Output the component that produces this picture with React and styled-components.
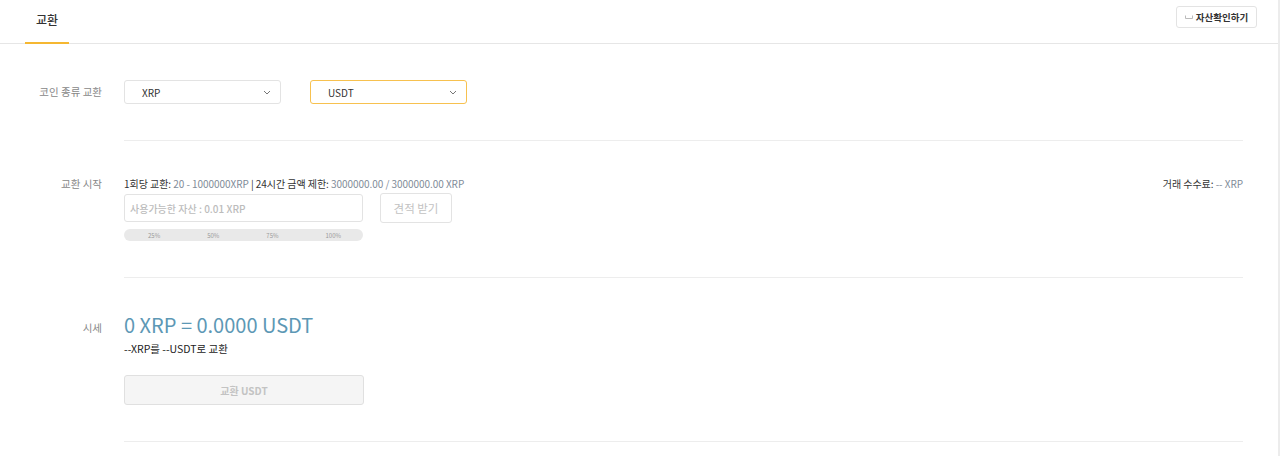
import React from "react";
import styled, { createGlobalStyle } from "styled-components";

const Global = createGlobalStyle`
  html, body { margin: 0; padding: 0; background: #fff; }
  body { font-family: "Noto Sans CJK KR", "Noto Sans", sans-serif; color: #333; }
  * { box-sizing: border-box; }
`;

const Page = styled.div`
  width: 1280px;
  height: 456px;
  border-right: 2px solid #ececec;
  overflow: hidden;
`;

const Header = styled.div`
  height: 44px;
  border-bottom: 1px solid #e6e6e6;
  display: flex;
  align-items: flex-start;
  justify-content: space-between;
  padding: 0 21px 0 25px;
`;

const Tab = styled.div`
  width: 44px;
  height: 44px;
  display: flex;
  align-items: center;
  justify-content: center;
  padding-bottom: 4px;
  font-size: 12px;
  font-weight: 500;
  color: #333;
  border-bottom: 2px solid #f5b731;
  margin-bottom: -1px;
`;

const AssetButton = styled.button`
  margin-top: 6px;
  height: 22px;
  width: 81px;
  padding: 0;
  display: flex;
  align-items: center;
  justify-content: center;
  gap: 3px;
  border: 1px solid #e3e3e3;
  border-radius: 3px;
  background: #fff;
  font-family: inherit;
  font-size: 9.5px;
  font-weight: 700;
  color: #333;
`;

const Row = styled.div`
  display: flex;
`;

const Label = styled.div`
  width: 102px;
  flex: none;
  margin-right: 22px;
  text-align: right;
  font-size: 10.5px;
  color: #888;
  padding-top: ${(p) => p.$top}px;
  line-height: ${(p) => p.$lh}px;
`;

const Content = styled.div`
  flex: 1;
  margin-right: 35px;
  padding: ${(p) => p.$pt}px 0 ${(p) => p.$pb}px;
  border-bottom: 1px solid #ededed;
`;

const SelectRow = styled.div`
  display: flex;
  gap: 29px;
`;

const Select = styled.div`
  width: 157px;
  height: 24px;
  border: 1px solid ${(p) => (p.$active ? "#f7c14f" : "#e3e3e3")};
  border-radius: 3px;
  display: flex;
  align-items: center;
  justify-content: space-between;
  padding: 0 9px 0 17px;
  font-size: 10px;
  color: #333;
`;

const InfoLine = styled.div`
  display: flex;
  justify-content: space-between;
  font-size: 10px;
  line-height: 12px;
  color: #333;
  letter-spacing: -0.05px;
`;

const Muted = styled.span`
  color: #7f8c99;
`;

const InputRow = styled.div`
  display: flex;
  gap: 17px;
  margin-top: 4px;
`;

const AmountInput = styled.div`
  width: 239px;
  height: 28px;
  border: 1px solid #e3e3e3;
  border-radius: 3px;
  display: flex;
  align-items: center;
  padding-left: 5px;
  font-size: 10px;
  font-weight: 500;
  color: #bcbcbc;
`;

const QuoteButton = styled.button`
  width: 72px;
  height: 30px;
  margin-top: -1px;
  border: 1px solid #e3e3e3;
  border-radius: 3px;
  background: #fff;
  font-family: inherit;
  font-size: 11.5px;
  color: #c2c2c2;
`;

const Slider = styled.div`
  width: 239px;
  height: 12px;
  margin-top: 6px;
  border-radius: 6px;
  background: #e9e9e9;
  display: flex;
  justify-content: space-between;
  align-items: center;
  padding: 0 22px 0 24px;
`;

const Tick = styled.span`
  font-size: 6px;
  color: #999;
`;

const Rate = styled.div`
  font-size: 20px;
  line-height: 24px;
  color: #5d98b5;
`;

const RateSub = styled.div`
  margin-top: 5px;
  font-size: 10.5px;
  line-height: 14px;
  color: #222;
`;

const ExchangeButton = styled.button`
  margin-top: 19px;
  width: 240px;
  height: 30px;
  border: 1px solid #e0e0e0;
  border-radius: 3px;
  background: #f5f5f5;
  font-family: inherit;
  font-size: 10px;
  font-weight: 700;
  color: #c3c3c3;
`;

const Chevron = () => (
  <svg width="8" height="5" viewBox="0 0 8 5" fill="none">
    <path d="M1 1 L4 4 L7 1" stroke="#777" strokeWidth="1" />
  </svg>
);

const WalletIcon = () => (
  <svg width="8" height="6" viewBox="0 0 8 6" fill="none">
    <path d="M0.5 1.5 V4.5 H7.5 V1.5" stroke="#bbb" strokeWidth="1" />
  </svg>
);

export default function App() {
  return (
    <Page>
      <Global />
      <Header>
        <Tab>교환</Tab>
        <AssetButton>
          <WalletIcon />
          자산확인하기
        </AssetButton>
      </Header>

      <Row>
        <Label $top={36} $lh={24}>코인 종류 교환</Label>
        <Content $pt={36} $pb={36}>
          <SelectRow>
            <Select>
              XRP
              <Chevron />
            </Select>
            <Select $active>
              USDT
              <Chevron />
            </Select>
          </SelectRow>
        </Content>
      </Row>

      <Row>
        <Label $top={37} $lh={12}>교환 시작</Label>
        <Content $pt={37} $pb={36}>
          <InfoLine>
            <span>
              1회당 교환: <Muted>20 - 1000000XRP</Muted> | 24시간 금액 제한:{" "}
              <Muted>3000000.00 / 3000000.00 XRP</Muted>
            </span>
            <span>
              거래 수수료: <Muted>-- XRP</Muted>
            </span>
          </InfoLine>
          <InputRow>
            <AmountInput>사용가능한 자산 : 0.01 XRP</AmountInput>
            <QuoteButton>견적 받기</QuoteButton>
          </InputRow>
          <Slider>
            <Tick>25%</Tick>
            <Tick>50%</Tick>
            <Tick>75%</Tick>
            <Tick>100%</Tick>
          </Slider>
        </Content>
      </Row>

      <Row>
        <Label $top={38} $lh={24}>시세</Label>
        <Content $pt={35} $pb={36}>
          <Rate>0 XRP = 0.0000 USDT</Rate>
          <RateSub>--XRP를 --USDT로 교환</RateSub>
          <ExchangeButton>교환 USDT</ExchangeButton>
        </Content>
      </Row>
    </Page>
  );
}
